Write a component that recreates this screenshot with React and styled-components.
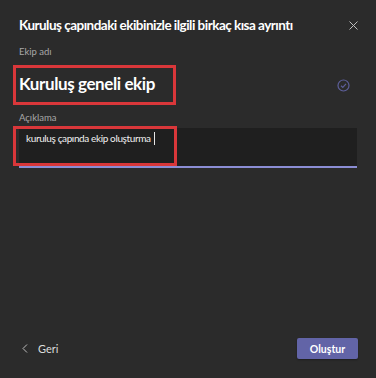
import React from "react";
import styled, { createGlobalStyle } from "styled-components";

const Global = createGlobalStyle`
  html, body { margin: 0; padding: 0; background: #2b2b2b; }
  body { font-family: Lato, "Noto Sans", sans-serif; color: #fff; }
`;

const Dialog = styled.div`
  box-sizing: border-box;
  height: 378px;
  width: 376px;
  background: #2b2b2b;
  display: flex;
  flex-direction: column;
  padding: 0 19px;
`;

const Header = styled.div`
  display: flex;
  align-items: center;
  justify-content: space-between;
  height: 24px;
  margin-top: 13px;
`;

const Title = styled.h1`
  margin: 0;
  font-size: 13.5px;
  font-weight: 700;
  letter-spacing: -0.52px;
  white-space: nowrap;
  color: #ffffff;
`;

const CloseBtn = styled.button`
  background: none;
  border: 0;
  padding: 0;
  margin-right: -1px;
  width: 10px;
  height: 10px;
  display: flex;
  align-items: center;
  justify-content: center;
  cursor: pointer;
`;

const Label = styled.div`
  font-size: 9.5px;
  color: #a8a8a8;
  margin-top: ${(p) => p.$top}px;
  line-height: 12px;
`;

const NameRow = styled.div`
  display: flex;
  align-items: center;
  justify-content: space-between;
  margin-top: 7px;
`;

const Highlight = styled.div`
  box-sizing: border-box;
  border: 3px solid #d9373a;
  margin-left: -6px;
  width: ${(p) => p.$w}px;
  height: 40px;
  padding-left: 3px;
  display: flex;
  align-items: center;
`;

const OverlayHighlight = styled(Highlight)`
  position: absolute;
  left: 0;
  top: -2px;
`;

const NameText = styled.div`
  font-size: 17px;
  font-weight: 700;
  letter-spacing: -0.4px;
  white-space: nowrap;
  color: #fff;
  padding-bottom: 3px;
`;

const CheckIcon = styled.svg`
  width: 13px;
  height: 13px;
  margin-right: 7px;
`;

const DescBox = styled.div`
  position: relative;
  box-sizing: border-box;
  margin-top: 4px;
  height: 40px;
  background: #1f1f1f;
  border-bottom: 2px solid #8b8dd4;
  padding: 2px 7px;
  font-size: 10px;
  letter-spacing: -0.38px;
  color: #f0f0f0;
  display: flex;
  align-items: flex-start;
`;

const Caret = styled.span`
  display: inline-block;
  width: 1px;
  height: 13px;
  background: #e6e6e6;
  margin-left: 3px;
  vertical-align: -3px;
`;

const DescText = styled.div`
  position: relative;
  z-index: 1;
  line-height: 16px;
  white-space: nowrap;
`;

const Footer = styled.div`
  margin-top: auto;
  margin-bottom: 19px;
  display: flex;
  align-items: center;
  justify-content: space-between;
`;

const BackBtn = styled.button`
  background: none;
  border: 0;
  padding: 0 0 0 3px;
  display: flex;
  align-items: center;
  gap: 10px;
  color: #dcdcdc;
  font-family: inherit;
  font-size: 11px;
`;

const PrimaryBtn = styled.button`
  box-sizing: border-box;
  width: 61px;
  height: 21px;
  margin-right: -1px;
  background: #6264a7;
  border: 0;
  border-radius: 2px;
  box-shadow: 0 1px 2px rgba(0, 0, 0, 0.35);
  color: #fff;
  font-family: inherit;
  font-size: 10.5px;
  font-weight: 700;
  padding: 0;
`;

export default function App() {
  return (
    <>
      <Global />
      <Dialog>
        <Header>
          <Title>Kuruluş çapındaki ekibinizle ilgili birkaç kısa ayrıntı</Title>
          <CloseBtn aria-label="Kapat">
            <svg width="9" height="9" viewBox="0 0 9 9">
              <path d="M0.5 0.5 L8.5 8.5 M8.5 0.5 L0.5 8.5" stroke="#bdbdbd" strokeWidth="1" />
            </svg>
          </CloseBtn>
        </Header>
        <Label $top={9}>Ekip adı</Label>
        <NameRow>
          <Highlight $w={163}>
            <NameText>Kuruluş geneli ekip</NameText>
          </Highlight>
          <CheckIcon viewBox="0 0 13 13">
            <circle cx="6.5" cy="6.5" r="5.5" fill="none" stroke="#5d5f9a" strokeWidth="1.2" />
            <path d="M4 6.7 L5.8 8.4 L9 4.9" fill="none" stroke="#5d5f9a" strokeWidth="1.2" />
          </CheckIcon>
        </NameRow>
        <Label $top={7}>Açıklama</Label>
        <DescBox>
          <OverlayHighlight $w={164} />
          <DescText>
            kuruluş çapında ekip oluşturma<Caret />
          </DescText>
        </DescBox>
        <Footer>
          <BackBtn>
            <svg width="6" height="9" viewBox="0 0 6 9">
              <path d="M5 0.5 L1 4.5 L5 8.5" fill="none" stroke="#bdbdbd" strokeWidth="1" />
            </svg>
            Geri
          </BackBtn>
          <PrimaryBtn>Oluştur</PrimaryBtn>
        </Footer>
      </Dialog>
    </>
  );
}
